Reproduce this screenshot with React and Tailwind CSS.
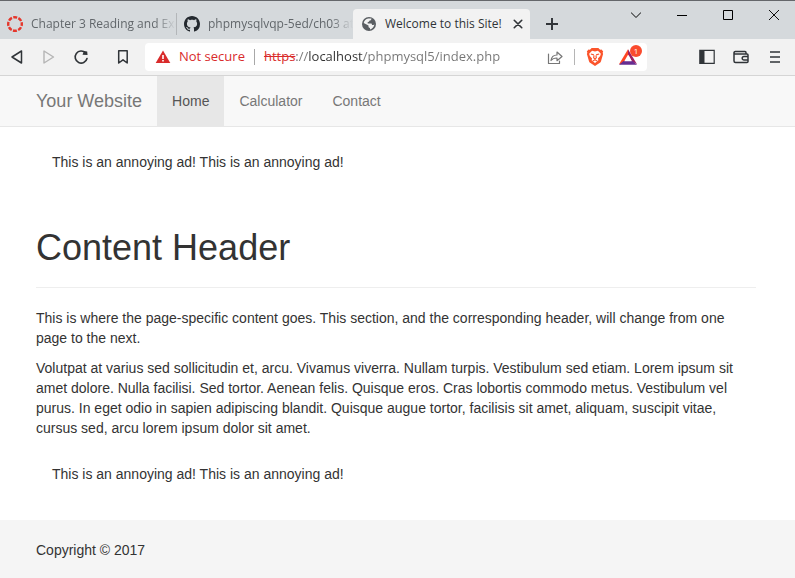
import React from "react";

const line = { fill: "none", stroke: "currentColor", strokeLinecap: "round", strokeLinejoin: "round" };

function Icon({ className = "size-4", children }) {
  return (
    <svg className={`shrink-0 ${className}`} viewBox="0 0 16 16" aria-hidden="true">
      {children}
    </svg>
  );
}

function CanvasLogo() {
  return (
    <Icon>
      <circle cx="8" cy="8" r="6.8" fill="none" stroke="#e5362b" strokeWidth="2.4" strokeDasharray="4 1.34" strokeDashoffset="2" />
    </Icon>
  );
}

function GithubLogo() {
  return (
    <Icon>
      <path fill="#24292f" d="M8 0C3.58 0 0 3.58 0 8c0 3.54 2.29 6.53 5.47 7.59.4.07.55-.17.55-.38 0-.19-.01-.82-.01-1.49-2.01.37-2.53-.49-2.69-.94-.09-.23-.48-.94-.82-1.13-.28-.15-.68-.52-.01-.53.63-.01 1.08.58 1.23.82.72 1.21 1.87.87 2.33.66.07-.52.28-.87.51-1.07-1.78-.2-3.64-.89-3.64-3.95 0-.87.31-1.59.82-2.15-.08-.2-.36-1.02.08-2.12 0 0 .67-.21 2.2.82.64-.18 1.32-.27 2-.27s1.36.09 2 .27c1.53-1.04 2.2-.82 2.2-.82.44 1.1.16 1.92.08 2.12.51.56.82 1.27.82 2.15 0 3.07-1.87 3.75-3.65 3.95.29.25.54.73.54 1.48 0 1.07-.01 1.93-.01 2.2 0 .21.15.46.55.38A8.01 8.01 0 0 0 16 8c0-4.42-3.58-8-8-8z" />
    </Icon>
  );
}

function Globe() {
  return (
    <Icon>
      <circle cx="8" cy="8" r="7" fill="#5a5e62" />
      <path fill="#f2f2f2" d="M7.2 2.6h3.3c-.2 1.7-1 2-2.2 2.1-.2 1-.7 1.3-1.6 1.3v1.5h3.2c.9 0 1.1.6 1.1 1.5h1.3c.5 0 .8-.3 1.1-.7-.2 2.6-2 4.6-4.4 5.1v-1.5c-1 0-1.5-.6-1.5-1.6V9.5L2.7 6.900c.5-2.200 2.200-3.900 4.500-4.300z" />
    </Icon>
  );
}

function Tab({ icon, title }) {
  return (
    <button type="button" className="flex h-[30px] w-[176px] min-w-0 items-center gap-2 pl-[7px] text-left text-xs text-[#62676b]">
      {icon}
      <span className="min-w-0 flex-1 whitespace-nowrap mask-r-from-85% mask-r-to-100%">{title}</span>
    </button>
  );
}

function TabStrip() {
  return (
    <div className="flex h-[39px] border-t border-[#65676b] bg-[#d5d9dc] pt-2">
      <div className="flex min-w-0 items-center">
        <Tab icon={<CanvasLogo />} title="Chapter 3 Reading and Exe" />
        <span className="h-[22px] w-px bg-[#b3b6b9]" />
        <Tab icon={<GithubLogo />} title="phpmysqlvqp-5ed/ch03 at" />
        <div className="flex h-[30px] w-[177px] shrink-0 items-center rounded-t bg-[#f2f2f2] pl-2 text-xs text-[#303438]">
          <button type="button" className="flex items-center gap-2 whitespace-nowrap">
            <Globe />
            Welcome to this Site!
          </button>
          <button type="button" aria-label="Close tab" className="mr-[7px] ml-auto">
            <Icon className="size-[10px]"><path {...line} strokeWidth="2.6" d="M2 2l12 12M14 2L2 14" /></Icon>
          </button>
        </div>
        <button type="button" aria-label="New tab" className="ml-4 text-[#303438]">
          <Icon className="size-3"><path d="M8 0v16M0 8h16" stroke="currentColor" strokeWidth="2.6" /></Icon>
        </button>
      </div>
      <div className="ml-auto flex h-3 items-center gap-9 pr-4 text-black">
        <button type="button" aria-label="Search tabs"><Icon className="size-[10px]"><path {...line} strokeWidth="1.6" d="M0 4l8 8 8-8" /></Icon></button>
        <button type="button" aria-label="Minimize"><Icon className="size-[10px]"><path stroke="currentColor" strokeWidth="1.6" d="M0 8.800h16" /></Icon></button>
        <button type="button" aria-label="Maximize"><Icon className="size-[10px]"><path fill="none" stroke="currentColor" strokeWidth="1.6" d="M.8.8h14.400v14.400H.8z" /></Icon></button>
        <button type="button" aria-label="Close window"><Icon className="size-[10px]"><path stroke="currentColor" strokeWidth="1.5" d="M0 0l16 16M16 0L0 16" /></Icon></button>
      </div>
    </div>
  );
}

function AddressBar() {
  return (
    <form className="ml-[14px] flex h-7 w-[502px] items-center rounded bg-white text-[13px]">
      <button type="button" className="flex items-center gap-2 pl-[10px] text-[#d92b2b]">
        <Icon>
          <path fill="#d92b2b" d="M8 1.500L15.300 14H.7z" />
          <path fill="#fff" d="M7.200 6h1.600v4H7.200zM7.200 11h1.600v1.600H7.200z" />
        </Icon>
        <span className="whitespace-nowrap">Not secure</span>
      </button>
      <span className="mx-[9px] h-4 w-px bg-[#a8a8a8]" />
      <label htmlFor="address" className="text-[#d92b2b] line-through">https</label>
      <input
        id="address"
        aria-label="Address"
        defaultValue="://localhost/phpmysql5/index.php"
        className="min-w-0 flex-1 bg-[linear-gradient(90deg,#757575_13px,#303030_13px,#303030_68px,#757575_68px)] bg-clip-text text-transparent caret-black outline-none"
      />
      <button type="button" aria-label="Share" className="text-[#777]">
        <Icon>
          <path {...line} strokeWidth="1.200" d="M1.500 5v9.500h11V12M4 11.500c.5-4 2.500-5.500 6-5.500V3l5 4.500-5 4.200V9C7.500 9 5.500 9.500 4 11.500z" />
        </Icon>
      </button>
      <span className="mx-[11px] h-4 w-px bg-[#b5b5b5]" />
      <button type="button" aria-label="Brave Shields">
        <Icon className="size-[18px]">
          <path fill="#fb542b" d="M5 0h6l1.500 1.500 1.300-.2L15.300 3l-.5 1.300.4 1-1.800 6.200c-.3 1-.7 1.400-1.400 1.900L8 16l-4-2.600c-.7-.5-1.100-.9-1.400-1.900L.8 5.300l.4-1L.7 3l1.500-1.700 1.300.2z" />
          <path fill="#fff" d="M8 3l2.600-.6L13.200 5l-.6 2-2 2.300.4 1.500L8 13.300l-3-2.500.4-1.500-2-2.300-.6-2 2.600-2.600z" />
          <path fill="none" stroke="#fb542b" strokeWidth="1" d="M4.300 5.400l2.700.7M11.700 5.400L9 6.100M7.200 6.500L6.800 8.800 8 9.800l1.200-1-.4-2.300M6 11.500l2-1 2 1" />
        </Icon>
      </button>
      <button type="button" aria-label="Brave Rewards, 1 notification" className="relative mr-[10px] ml-[15px]">
        <Icon className="size-[18px]">
          <path fill="#ff4724" d="M8 1L0 14.500h1.500L5 12l4-6.500z" />
          <path fill="#9e1f63" d="M8 1l8 13.500L11.500 12 8 5z" />
          <path fill="#662d91" d="M0 14.800L4 11.500h8l4 3.300z" />
          <path fill="#fff" d="M8 6l3.300 5.700H4.700z" />
        </Icon>
        <span className="absolute -top-[3px] -right-[5px] flex size-3 items-center justify-center rounded-full bg-[#fa4b2e] text-[8px] text-white">1</span>
      </button>
    </form>
  );
}

function Toolbar() {
  return (
    <div className="flex h-[37px] items-center border-b border-[#d5d5d5] bg-[#f2f2f2] pr-3 pl-[9px] text-[#303438]">
      <div className="flex items-center gap-4">
        <button type="button" aria-label="Back"><Icon><path {...line} strokeWidth="1.5" d="M3 8l9.500-6v12z" /></Icon></button>
        <button type="button" aria-label="Forward" disabled className="text-[#b5b5b5]"><Icon><path {...line} strokeWidth="1.4" d="M12.500 8L3 2v12z" /></Icon></button>
        <button type="button" aria-label="Reload">
          <Icon>
            <path {...line} strokeWidth="1.6" d="M12.600 4A6 6 0 1 0 14 9.500" />
            <path fill="currentColor" d="M9.500 5.700L11 2l3.200.5.300 3.400z" />
          </Icon>
        </button>
      </div>
      <button type="button" aria-label="Bookmark" className="ml-[26px]"><Icon><path {...line} strokeWidth="1.5" d="M3.700 1.800h8.500V14L8 10.800 3.700 14z" /></Icon></button>
      <AddressBar />
      <div className="ml-auto flex items-center gap-[18px]">
        <button type="button" aria-label="Sidebar">
          <Icon><path fill="none" stroke="currentColor" strokeWidth="1.2" d="M.8 1.300h14.400v13H.8z" /><path fill="currentColor" d="M1 1.500h4.500v12.800H1z" /></Icon>
        </button>
        <button type="button" aria-label="Wallet">
          <Icon><path {...line} strokeWidth="1.5" d="M13 5V3.800Q13 2.500 12 2.500H2.300a1.250 1.250 0 0 0 0 2.500H14q1 0 1 1v6.500q0 1-1 1H2.500Q1 13.500 1 12V3.500M15 7.500h-4a1.800 1.800 0 0 0 0 3.600h4" /></Icon>
        </button>
        <button type="button" aria-label="Menu"><Icon><path stroke="currentColor" strokeWidth="1.5" d="M3 3h10M3 8h10M3 13h10" /></Icon></button>
      </div>
    </div>
  );
}

function Ad() {
  return <p className="px-4">This is an annoying ad! This is an annoying ad!</p>;
}

export default function App() {
  return (
    <div className="flex min-h-screen flex-col bg-white">
      <header className="font-['Open_Sans','Noto_Sans',sans-serif]">
        <TabStrip />
        <Toolbar />
      </header>
      <div className="flex flex-1 flex-col font-['Liberation_Sans',Arial,sans-serif] text-sm leading-5 text-[#333]">
        <nav className="flex h-[51px] border-b border-[#e7e7e7] bg-[#f8f8f8] pl-9 text-[#777]">
          <a href="#top" className="py-[15px] pr-[15px] text-lg leading-5">Your Website</a>
          <a href="#home" aria-current="page" className="bg-[#e7e7e7] p-[15px] text-[#555]">Home</a>
          <a href="#calculator" className="p-[15px]">Calculator</a>
          <a href="#contact" className="p-[15px]">Contact</a>
        </nav>
        <main className="pt-[25px] pr-[39px] pb-9 pl-9">
          <Ad />
          <h1 className="mt-14 border-b border-[#eee] pb-[19px] text-4xl leading-10">Content Header</h1>
          <div className="mt-5 mb-[26px] space-y-[10px]">
            <p>This is where the page-specific content goes. This section, and the corresponding header, will change from one page to the next.</p>
            <p>Volutpat at varius sed sollicitudin et, arcu. Vivamus viverra. Nullam turpis. Vestibulum sed etiam. Lorem ipsum sit amet dolore. Nulla facilisi. Sed tortor. Aenean felis. Quisque eros. Cras lobortis commodo metus. Vestibulum vel purus. In eget odio in sapien adipiscing blandit. Quisque augue tortor, facilisis sit amet, aliquam, suscipit vitae, cursus sed, arcu lorem ipsum dolor sit amet.</p>
          </div>
          <Ad />
        </main>
        <footer className="flex-1 bg-[#f5f5f5] px-9 pt-5">
          <p>Copyright © 2017</p>
        </footer>
      </div>
    </div>
  );
}
